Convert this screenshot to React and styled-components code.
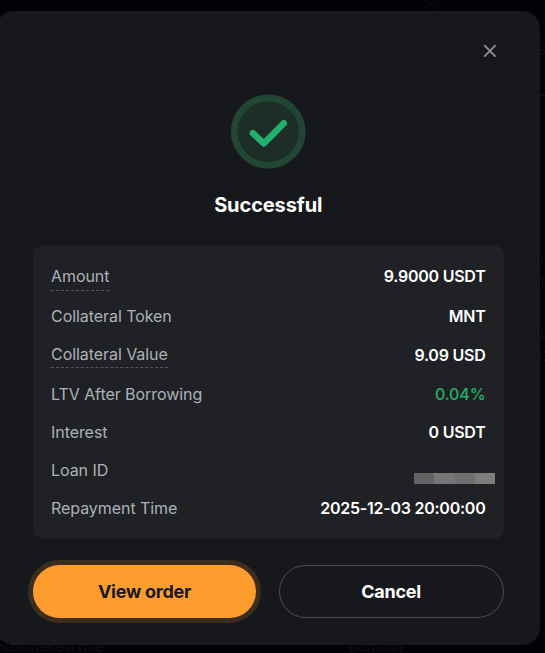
import React from "react";
import styled, { createGlobalStyle } from "styled-components";

const GlobalStyle = createGlobalStyle`
  * {
    box-sizing: border-box;
  }
  body {
    margin: 0;
    background: #020306;
    font-family: Inter, "Liberation Sans", sans-serif;
  }
`;

const details = [
  { label: "Amount", value: "9.9000 USDT", height: 40, hint: 4 },
  { label: "Collateral Token", value: "MNT", height: 38 },
  { label: "Collateral Value", value: "9.09 USD", height: 40, hint: 3, drop: 1 },
  { label: "LTV After Borrowing", value: "0.04%", height: 38, positive: true },
  { label: "Interest", value: "0 USDT", height: 38 },
  { label: "Loan ID", masked: true, height: 38 },
  { label: "Repayment Time", value: "2025-12-03 20:00:00", height: 22 },
];

const maskColors = ["#626364", "#757678", "#6e6f70", "#7d7d7c"];

const App = () => {
  return (
    <Page>
      <GlobalStyle />
      <BehindCurve width="16" height="12" viewBox="0 0 16 12">
        <path d="M0 0C1 3 3 2 6 3.500C10 5 12 7 14 11" fill="none" stroke="#101114" />
      </BehindCurve>
      <BehindLine />
      <Behind $left={-20} $top={637}>Annual interest rate</Behind>
      <Behind $left={349} $top={637}>Duration</Behind>
      <Behind $left={537} $top={40}>S</Behind>
      <Behind $left={540} $top={251}>I</Behind>
      <Behind $left={539} $top={273}>1</Behind>
      <Behind $left={540} $top={323}>L</Behind>
      <Behind $left={539} $top={346}>0</Behind>
      <Modal>
        <CloseButton aria-label="Close">
          <svg width="14" height="14" viewBox="0 0 14 14">
            <path d="M1.2 1.2 12.6 12.6M12.6 1.2 1.2 12.6" stroke="#8c8f96" strokeWidth="1.8" />
          </svg>
        </CloseButton>
        <StatusIcon width="76" height="76" viewBox="0 0 76 76">
          <ellipse cx="38.2" cy="37.6" rx="34" ry="33.6" fill="#1d2d27" stroke="#214633" strokeWidth="6.800" />
          <path
            d="M22.8 39.2 33.8 49.4 53.8 29.200"
            fill="none"
            stroke="#20b26c"
            strokeWidth="6.4"
            strokeLinecap="round"
            strokeLinejoin="round"
          />
        </StatusIcon>
        <Title>Successful</Title>
        <Details>
          {details.map((item) => (
            <Row key={item.label} $height={item.height}>
              <Label $hint={item.hint}>{item.label}</Label>
              {item.masked ? (
                <Mask>
                  {maskColors.map((color) => (
                    <MaskBlock key={color} $color={color} />
                  ))}
                </Mask>
              ) : (
                <Value $positive={item.positive} $drop={item.drop}>
                  {item.value}
                </Value>
              )}
            </Row>
          ))}
        </Details>
        <Actions>
          <Button $primary>View order</Button>
          <Button>Cancel</Button>
        </Actions>
      </Modal>
    </Page>
  );
};

const Page = styled.div`
  position: relative;
  height: 653px;
  padding-top: 11px;
  overflow: hidden;
`;

const Behind = styled.span`
  position: absolute;
  left: ${(props) => props.$left}px;
  top: ${(props) => props.$top}px;
  color: #0f1013;
  font-size: 13.4px;
  line-height: 20px;
  white-space: nowrap;
`;

const BehindCurve = styled.svg`
  position: absolute;
  left: 424px;
  top: 0;
`;

const BehindLine = styled.div`
  position: absolute;
  right: 0;
  top: 95px;
  width: 6px;
  height: 1px;
  background: #0f1013;
`;

const Modal = styled.div`
  position: relative;
  display: flex;
  flex-direction: column;
  width: 544px;
  height: 634px;
  margin-left: -4px;
  padding: 33px 36.5px 0 37px;
  border-radius: 18px;
  background: #17181b;
`;

const CloseButton = styled.button`
  display: flex;
  align-self: flex-end;
  height: 14px;
  margin-right: 6.5px;
  padding: 0;
  border: 0;
  background: none;
`;

const StatusIcon = styled.svg`
  align-self: center;
  margin-top: 36px;
`;

const Title = styled.h1`
  margin: 21px 0 0;
  color: #fff;
  font-size: 20px;
  font-weight: 650;
  line-height: 28px;
  letter-spacing: -0.1px;
  text-align: center;
`;

const Details = styled.div`
  height: 292px;
  margin-top: 27px;
  padding: 19px 18px 0;
  border-radius: 8px;
  background: #202124;
`;

const Row = styled.div`
  display: flex;
  align-items: flex-start;
  justify-content: space-between;
  height: ${(props) => props.$height}px;
  font-size: 16px;
  line-height: 22px;
`;

const Label = styled.span`
  color: #adb1b8;
  letter-spacing: -0.06px;
  padding-bottom: ${(props) => props.$hint - 1 || 0}px;
  border-bottom: ${(props) => (props.$hint ? "1px dashed #52555a" : "0")};
`;

const Value = styled.span`
  margin-top: ${(props) => props.$drop || 0}px;
  color: ${(props) => (props.$positive ? "#20b26c" : "#fff")};
  font-weight: ${(props) => (props.$positive ? 500 : 600)};
  letter-spacing: ${(props) => (props.$positive ? "-0.1px" : "-0.24px")};
`;

const Mask = styled.div`
  display: flex;
  width: 81px;
  height: 11px;
  margin: 14px -9.5px 0 0;
`;

const MaskBlock = styled.span`
  flex: 1;
  background: ${(props) => props.$color};
`;

const Actions = styled.div`
  display: grid;
  grid-template-columns: 223px 225px;
  justify-content: space-between;
  margin-top: 27px;
`;

const Button = styled.button`
  height: 53px;
  padding: 0;
  border: ${(props) => (props.$primary ? "0" : "1px solid #4b4c50")};
  border-radius: 27px;
  background: ${(props) => (props.$primary ? "#ff9c2e" : "transparent")};
  box-shadow: ${(props) => (props.$primary ? "0 0 0 5px #3c2e1e" : "none")};
  color: ${(props) => (props.$primary ? "#17181b" : "#fff")};
  font-family: inherit;
  font-size: 18px;
  font-weight: 650;
  letter-spacing: -0.25px;
`;

export default App;
